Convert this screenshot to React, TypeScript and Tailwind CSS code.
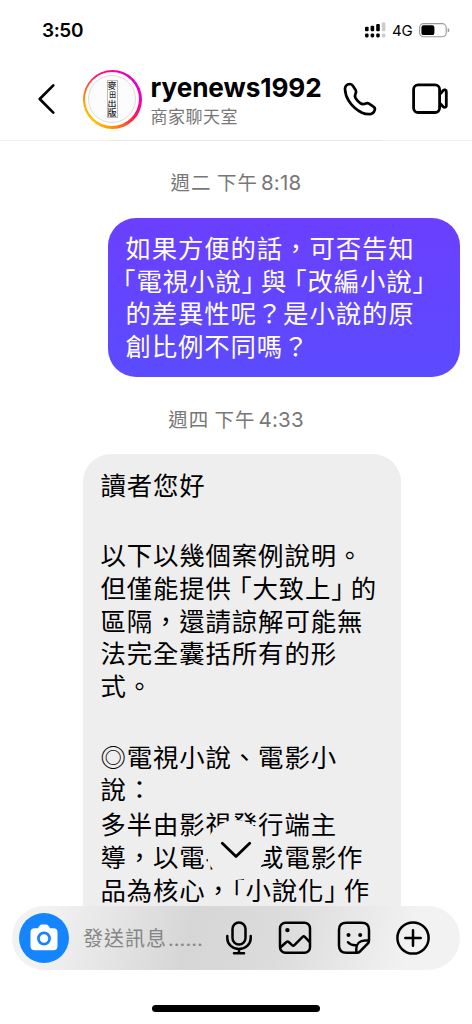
import React from "react";

const cjk = "font-['Noto_Sans_CJK_TC',sans-serif] [text-spacing-trim:space-all]";
const line = "h-[32.6px] whitespace-nowrap leading-[32.6px]";
const half = "[font-feature-settings:'halt']";

function StatusBar() {
  return (
    <div className="flex h-[60px] shrink-0 items-center pl-[42px] pr-[22px]">
      <span className="text-[19px] font-semibold leading-none tracking-[-0.4px]">3:50</span>
      <div className="ml-auto flex items-center">
        <svg width="21" height="16" viewBox="0 0 21 16">
          <rect x="0" y="4.7" width="3.6" height="4.5" rx="1" />
          <rect x="5.6" y="3.7" width="3.6" height="5.5" rx="1" />
          <rect x="11.2" y="1.9" width="3.6" height="7.3" rx="1" />
          <rect x="16.8" y="0.5" width="3.6" height="8.7" rx="1" fill="#ccc" />
          <rect x="0" y="11.4" width="3.6" height="4" rx="1.3" />
          <rect x="5.6" y="11.4" width="3.6" height="4" rx="1.3" />
          <rect x="11.2" y="11.4" width="3.6" height="4" rx="1.3" />
          <rect x="16.8" y="11.4" width="3.6" height="4" rx="1.3" fill="#ccc" />
        </svg>
        <span className="ml-[6px] w-[21px] text-[15px] leading-none tracking-[-0.2px]">4G</span>
        <svg className="ml-[6px]" width="31" height="15" viewBox="0 0 31 15">
          <rect x="0.6" y="0.6" width="26.6" height="13.2" rx="4" fill="none" stroke="#999" strokeWidth="1.1" />
          <rect x="2.4" y="2.3" width="13" height="9.8" rx="2.2" />
          <path d="M28.7 5v4.6c1.2-.5 1.7-1.3 1.7-2.3s-.5-1.8-1.7-2.3z" fill="#999" />
        </svg>
      </div>
    </div>
  );
}

function Avatar() {
  return (
    <div className="-mt-[2px] ml-[26.500px] flex size-[59px] shrink-0 items-center justify-center rounded-full bg-[conic-gradient(#ff00a0_0deg,#d900d8_45deg,#f000c0_75deg,#ff0090_105deg,#ff1b4a_130deg,#ff5a20_155deg,#ff9a00_185deg,#ffc400_220deg,#ffb000_255deg,#ff6a18_290deg,#ff1670_325deg,#ff00a0_360deg)]">
      <div className="flex size-[54px] items-center justify-center rounded-full bg-white">
        <div className="flex size-[48px] items-center justify-center rounded-full border border-[#ddd] bg-[#fcfcfc]">
          <div className="grid h-[38px] w-[11px] grid-rows-4 justify-items-center border border-[#bbb] font-['Noto_Sans_CJK_TC',serif] text-[9px] font-medium leading-[9px] text-[#222]">
            <span>麥</span>
            <span className="scale-75">田</span>
            <span className="scale-y-75">出</span>
            <span>版</span>
          </div>
        </div>
      </div>
    </div>
  );
}

function Header() {
  return (
    <div className="flex h-[81px] shrink-0 flex-col">
      <div className="flex h-[80px] items-center pl-[37px]">
        <svg className="-mt-[2px]" width="19" height="32" viewBox="0 0 19 32" fill="none" stroke="#000" strokeWidth="2.7" strokeLinecap="round" strokeLinejoin="round">
          <path d="M16.3 2.4 2.7 16l13.6 13.6" />
        </svg>
        <Avatar />
        <div className="ml-[9px] mt-[2px] flex w-[181px] flex-col">
          <span className="h-[28px] text-[26.2px] font-bold leading-[28px] tracking-[-0.1px]">ryenews1992</span>
          <span className={`${cjk} h-[27px] text-[17px] leading-[28px] tracking-[0.5px] text-[#777]`}>商家聊天室</span>
        </div>
        <svg className="-mt-[2px] ml-[11.500px]" width="34" height="34" viewBox="0 0 34 34" fill="none" stroke="#000" strokeWidth="2.700" strokeLinejoin="round">
          <path d="M7 2C3.800 2.300 2 4 2 7c.2 5 1.500 8.500 4 12.300 3.500 5.200 8 9 13 11.500 2.200 1 4.500 1.400 7 1.400 3 0 5-1.800 5.800-4.400.4-1.400 0-2.300-1.400-3.200l-4.400-3c-1.200-.8-2-.8-3.300-.2-2 .9-3.700 1-5.500-.3-1.600-1.100-3.300-2.900-4.400-4.600-1.200-1.800-1.100-3.200-.2-5 .7-1.400.7-2.300 0-3.600L10 4C9.200 2.600 8.400 2 7 2z" />
        </svg>
        <svg className="-mt-[2px] ml-[35px]" width="37" height="32" viewBox="0 0 37 32" fill="none" stroke="#000" strokeWidth="2.8" strokeLinejoin="round">
          <rect x="1.600" y="1.900" width="26" height="27.600" rx="4.500" />
          <path d="M27.800 11.200 31.200 7.500c1.200-1.100 3.100-.7 3.100 1v14.200c0 1.700-1.900 2.100-3.100 1l-3.400-3.600" />
        </svg>
      </div>
      <div className="h-px bg-[linear-gradient(90deg,#f1f1f1_108px,#e6e6e6_112px,#e6e6e6_380px,#f1f1f1_386px)]" />
    </div>
  );
}

function Stamp({ day, time }: { day: string; time: string }) {
  return (
    <div className="flex h-[30px] items-start justify-center text-[#777]">
      <span className={`${cjk} whitespace-pre text-[19.5px] leading-[28px] tracking-[1px]`}>{day}</span>
      <span className="ml-[3px] text-[20.5px] leading-[30px] tracking-[0.2px]">{time}</span>
    </div>
  );
}

function Chat() {
  return (
    <div className="relative h-[765px] shrink-0 overflow-hidden">
      <div className="pt-[27px]">
        <Stamp day="週二 下午" time="8:18" />
      </div>
      <div className={`${cjk} ml-[108px] mt-[20px] h-[159px] w-[352px] rounded-[28px] bg-linear-to-b from-[#6b3fff] to-[#5b4bff] pl-[17.500px] pt-[13px] text-[25.400px] tracking-[0.880px] text-white`}>
        <div className={line}>如果方便的話，可否告知</div>
        <div className={line}>
          <span className={`-ml-[2.700px] ${half}`}>「</span>電視小說<span className={`mr-[6px] ${half}`}>」</span>與<span className={`ml-[6.500px] ${half}`}>「</span>改編小說<span className={half}>」</span>
        </div>
        <div className={line}>的差異性呢？是小說的原</div>
        <div className={line}>創比例不同嗎？</div>
      </div>
      <div className="mt-[28px]">
        <Stamp day="週四 下午" time="4:33" />
      </div>
      <div className={`${cjk} ml-[83px] mt-[19px] h-[500px] w-[318px] rounded-[28px] bg-[#eee] pl-[17.500px] pt-[13.500px] text-[25.400px] tracking-[0.880px] text-black`}>
        <div className={line}>讀者您好</div>
        <div className={`mt-[38.4px] ${line}`}>以下以幾個案例說明。</div>
        <div className={line}>
          但僅能提供<span className={`ml-[7px] ${half}`}>「</span>大致上<span className={`mr-[6px] ${half}`}>」</span>的
        </div>
        <div className={line}>區隔，還請諒解可能無</div>
        <div className={line}>法完全囊括所有的形</div>
        <div className={line}>式。</div>
        <div className={`mt-[38.4px] ${line}`}>◎電視小說、電影小</div>
        <div className={line}>說：</div>
        <div className={`mt-[2.4px] ${line}`}>多半由影視發行端主</div>
        <div className={line}>導，以電視劇或電影作</div>
        <div className={line}>
          品為核心，<span className={half}>「</span>小說化<span className={`mr-[6px] ${half}`}>」</span>作
        </div>
      </div>
      <div className="absolute left-[206px] top-[679px] flex size-[60px] items-center justify-center rounded-full bg-[#eee]">
        <svg width="32" height="20" viewBox="0 0 32 20" fill="none" stroke="#000" strokeWidth="2.8" strokeLinecap="round" strokeLinejoin="round">
          <path d="M2.300 3.200 16 16.600 29.700 3.200" />
        </svg>
      </div>
    </div>
  );
}

function Composer() {
  return (
    <div className="ml-[12px] flex h-[64px] w-[448px] shrink-0 items-center rounded-[32px] bg-[linear-gradient(105deg,#f2f2f2_8%,#d6d6d6_40%,#dcdcdc_60%,#f2f2f2_88%)] pl-[7px]">
      <div className="flex size-[50px] items-center justify-center rounded-full bg-[#1485ff]">
        <svg className="-mt-[2px]" width="28" height="27" viewBox="0 0 28 27">
          <path d="M4.500 4.200h3.200L9.600 1.700C10.300.9 11 .5 12 .5h4c1 0 1.700.4 2.400 1.200l1.900 2.500h3.200c2.500 0 4 1.500 4 4v14c0 2.500-1.500 4-4 4h-19c-2.500 0-4-1.500-4-4v-14c0-2.500 1.500-4 4-4z" fill="#fff" />
          <circle cx="14" cy="14.500" r="5.600" fill="none" stroke="#1485ff" strokeWidth="2.700" />
        </svg>
      </div>
      <span className={`${cjk} ml-[14px] w-[130px] whitespace-nowrap text-[20px] leading-[30px] tracking-[1px] text-[#858585]`}>
        發送訊息<span className="ml-[1px] font-['Inter',sans-serif] tracking-[0.300px]">……</span>
      </span>
      <svg className="ml-[12px]" width="28" height="34" viewBox="0 0 28 34" fill="none" stroke="#000" strokeWidth="2.500" strokeLinecap="round">
        <rect x="7.500" y="1.500" width="13" height="22" rx="6.500" />
        <path d="M2.300 15v2.200a11.700 10.800 0 0 0 23.400 0V15M14 28v4M9 32.200h10" />
      </svg>
      <svg className="ml-[25px]" width="34" height="34" viewBox="0 0 34 34" fill="none" stroke="#000" strokeWidth="2.500" strokeLinecap="round" strokeLinejoin="round">
        <rect x="2" y="1.800" width="30" height="30" rx="5.500" />
        <path d="M2.300 26.500 8.500 21c.8-.7 1.400-.7 2.200 0l3.600 3.300c.8.700 1.400.6 2.100-.1l8.200-8.300c.8-.8 1.400-.8 2.200 0l5 5.200" />
        <circle cx="9.400" cy="9.100" r="2.200" fill="#000" stroke="none" />
      </svg>
      <svg className="ml-[25px]" width="34" height="34" viewBox="0 0 34 34" fill="none" stroke="#000" strokeWidth="2.500" strokeLinecap="round" strokeLinejoin="round">
        <path d="M20 31.800H9.500C4.500 31.800 2 29.500 2 24.500V9c0-5 2.500-7.200 7.500-7.200h15C29.500 1.800 32 4 32 9v10.500c0 1.500-.4 2.300-1.300 3.200l-7.800 7.800c-.9.900-1.600 1.300-2.900 1.300z" />
        <path d="M19.300 31v-3c0-5.200 3.500-8.400 8.700-8.400h3.500M11 21.200c2 2.300 4.500 3.200 8.200 3" />
        <circle cx="11.500" cy="14" r="2" fill="#000" stroke="none" />
        <circle cx="23.200" cy="14" r="2" fill="#000" stroke="none" />
      </svg>
      <svg className="ml-[24px]" width="36" height="36" viewBox="0 0 36 36" fill="none" stroke="#000" strokeWidth="2.500" strokeLinecap="round">
        <circle cx="18" cy="18" r="15.600" />
        <path d="M10.300 18h15.400M18 10.300v15.400" />
      </svg>
    </div>
  );
}

export default function App() {
  return (
    <div lang="zh-TW" className="flex h-[1024px] w-[472px] flex-col overflow-hidden bg-white font-['Inter',sans-serif] text-black">
      <StatusBar />
      <Header />
      <Chat />
      <Composer />
      <div className="flex flex-1 items-start justify-center pt-[35px]">
        <div className="h-[7px] w-[168px] rounded-full bg-black" />
      </div>
    </div>
  );
}
